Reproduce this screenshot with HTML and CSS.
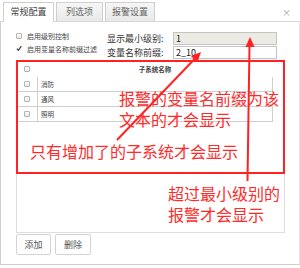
FILE: index.html
```html
<!DOCTYPE html>
<html lang="zh">
<head>
    <meta charset="UTF-8">
    <title>常规配置</title>
    <link rel="stylesheet" href="styles.css">
</head>
<body>
    <div class="dialog">
        <div class="tabs">
            <div class="tab active">常规配置</div>
            <div class="tab t2">列选项</div>
            <div class="tab t3">报警设置</div>
            <span class="close">×</span>
        </div>
        <div class="panel">
            <div class="options">
                <div class="checks">
                    <div class="check"><span class="box"></span>启用级别控制</div>
                    <div class="check"><span class="box checked"><svg width="7" height="7" viewBox="0 0 7 7"><path d="M1 3.6 L2.8 5.6 L6.2 0.8" fill="none" stroke="#333" stroke-width="1.3"/></svg></span>启用变量名称前缀过滤</div>
                </div>
                <div class="fields">
                    <div class="field"><span class="label">显示最小级别:</span><span class="input disabled">1</span></div>
                    <div class="field"><span class="label">变量名称前缀:</span><span class="input">2_10</span></div>
                </div>
            </div>
            <div class="grid">
                <div class="thead">
                    <div class="cell-check"><span class="box"></span></div>
                    <div class="cell-name head">子系统名称</div>
                </div>
                <div class="row">
                    <div class="cell-check"><span class="box"></span></div>
                    <div class="cell-name">消防</div>
                </div>
                <div class="row">
                    <div class="cell-check"><span class="box"></span></div>
                    <div class="cell-name">通风</div>
                </div>
                <div class="row">
                    <div class="cell-check"><span class="box"></span></div>
                    <div class="cell-name">照明</div>
                </div>
            </div>
            <div class="buttons">
                <button type="button" class="btn">添加</button>
                <button type="button" class="btn wide">删除</button>
            </div>
        </div>

        <svg class="marks" width="300" height="268" viewBox="0 0 300 268">
            <rect x="17" y="61" width="267" height="112" fill="none" stroke="#ff2222" stroke-width="2"/>
            <line x1="247.5" y1="181" x2="249.5" y2="45" stroke="#ff2222" stroke-width="2"/>
            <polygon points="250,37 245.5,47 254.5,47" fill="#ff2222"/>
            <line x1="117" y1="140" x2="195" y2="58.5" stroke="#ff2222" stroke-width="2"/>
            <polygon points="201,52 197.4,62.3 190.9,56.1" fill="#ff2222"/>
        </svg>
        <div class="note n1">报警的变量名前缀为该<br>文本的才会显示</div>
        <div class="note n2">只有增加了的子系统才会显示</div>
        <div class="note n3">超过最小级别的<br>报警才会显示</div>
    </div>
</body>
</html>
```

FILE: styles.css
```css
body {
    margin: 0;
    background: #fff;
    font-family: "Noto Sans CJK SC", "Liberation Sans", sans-serif;
    color: #333;
}

.dialog {
    position: relative;
    width: 300px;
    height: 268px;
}

.tabs {
    position: relative;
    display: flex;
    align-items: flex-end;
    gap: 2px;
    height: 21px;
    padding-left: 3px;
    border-bottom: 1px solid #d6d6d6;
}

.tab {
    box-sizing: border-box;
    width: 51px;
    height: 19px;
    border: 1px solid #cfcfcf;
    border-bottom: none;
    background: linear-gradient(#f6f6f6, #e9e9e9);
    color: #666;
    font-size: 9px;
    line-height: 18px;
    text-align: center;
}

.tab.active {
    height: 20px;
    margin-bottom: -1px;
    background: #fff;
    color: #444;
}

.tab.t2 {
    width: 47px;
}

.tab.t3 {
    width: 50px;
}

.close {
    position: absolute;
    right: 9px;
    top: 8px;
    color: #999;
    font-size: 9px;
    line-height: 10px;
}

.panel {
    height: 242px;
    border-left: 1px solid #cfcfcf;
    border-right: 1px solid #e4e4e4;
    border-bottom: 1px solid #cfcfcf;
}

.options {
    display: flex;
    box-sizing: border-box;
    height: 38px;
    padding: 7px 0 0 15px;
}

.checks {
    width: 91px;
}

.check {
    display: flex;
    align-items: center;
    gap: 5px;
    height: 13px;
    font-size: 7px;
    color: #444;
}

.box {
    display: inline-flex;
    align-items: center;
    justify-content: center;
    box-sizing: border-box;
    width: 6px;
    height: 6px;
    border: 1px solid #b4b4b4;
    border-radius: 1px;
    background: linear-gradient(#fff, #e8e8e8);
}

.box.checked {
    border: none;
    background: none;
}

.fields {
    display: flex;
    flex-direction: column;
    gap: 1px;
    margin-top: 3px;
}

.field {
    display: flex;
    align-items: center;
    height: 13px;
}

.label {
    width: 66px;
    font-size: 9px;
    color: #333;
}

.input {
    box-sizing: border-box;
    width: 104px;
    height: 13px;
    padding-left: 2px;
    border: 1px solid #c4c4c4;
    background: #fff;
    font-size: 9px;
    line-height: 11px;
    color: #222;
}

.input.disabled {
    background: #ebebe4;
}

.grid {
    box-sizing: border-box;
    width: 269px;
    height: 173px;
    margin-left: 15px;
    border: 1px solid #dedede;
    padding-right: 11px;
}

.thead {
    display: flex;
    align-items: center;
    height: 16px;
}

.row {
    display: flex;
    align-items: center;
    height: 14px;
    border-bottom: 1px solid #cfcfcf;
    border-right: 1px solid #cfcfcf;
}

.cell-check {
    display: flex;
    justify-content: center;
    width: 20px;
}

.cell-name {
    flex: 1;
    align-self: stretch;
    padding-left: 3px;
    border-left: 1px solid #cfcfcf;
    font-size: 6.5px;
    line-height: 14px;
    color: #444;
}

.cell-name.head {
    border-left: none;
    padding-left: 0;
    text-align: center;
    font-weight: bold;
    line-height: 16px;
}

.buttons {
    display: flex;
    gap: 4px;
    margin: 1px 0 0 15px;
}

.btn {
    width: 35px;
    height: 21px;
    padding: 0;
    border: 1px solid #d4d4d4;
    border-radius: 2px;
    background: #fff;
    font-family: inherit;
    font-size: 9px;
    color: #555;
}

.btn.wide {
    width: 36px;
}

.marks {
    position: absolute;
    left: 0;
    top: 0;
    pointer-events: none;
}

.note {
    position: absolute;
    color: #ff2b2b;
    font-size: 16px;
    line-height: 21px;
    white-space: nowrap;
}

.n1 {
    left: 119px;
    top: 88px;
}

.n2 {
    left: 30px;
    top: 141px;
}

.n3 {
    left: 168px;
    top: 183px;
}
```
